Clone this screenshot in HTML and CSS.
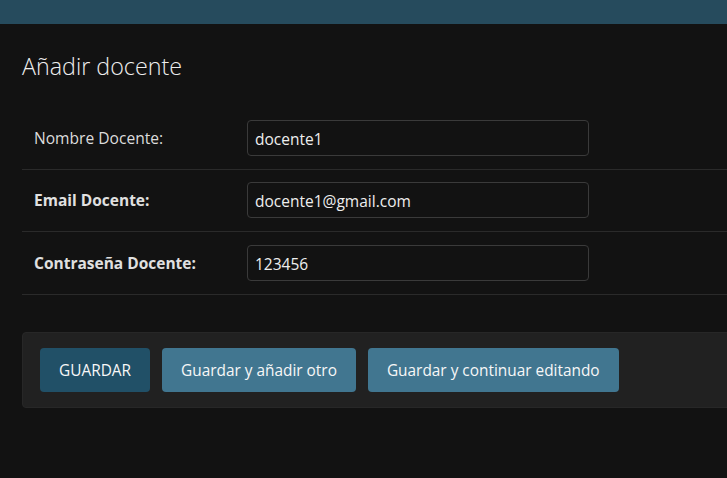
FILE: index.html
```html
<!DOCTYPE html>
<html lang="es">
<head>
<meta charset="utf-8">
<title>Añadir docente</title>
<link rel="stylesheet" href="styles.css">
</head>
<body>
<header class="topbar"></header>
<main class="content">
  <h1 class="title">Añadir docente</h1>
  <form class="form">
    <div class="form-row">
      <label class="label">Nombre Docente:</label>
      <input class="field" type="text" value="docente1">
    </div>
    <div class="form-row">
      <label class="label required">Email Docente:</label>
      <input class="field" type="text" value="docente1@gmail.com">
    </div>
    <div class="form-row form-row-last">
      <label class="label required">Contraseña Docente:</label>
      <input class="field" type="text" value="123456">
    </div>
    <div class="submit-row">
      <button type="button" class="btn btn-default">GUARDAR</button>
      <button type="button" class="btn">Guardar y añadir otro</button>
      <button type="button" class="btn">Guardar y continuar editando</button>
    </div>
  </form>
</main>
</body>
</html>
```
FILE: styles.css
```css
html, body {
  margin: 0;
  padding: 0;
  background: #121212;
  overflow: hidden;
}
body {
  font-family: "Open Sans", "Noto Sans", sans-serif;
  color: #e0e0e0;
}
.topbar {
  height: 24px;
  background: #264b5d;
}
.content {
  padding-left: 22px;
  margin-right: -20px;
}
.title {
  margin: 27px 0 27px;
  font-size: 23.3px;
  line-height: 30px;
  font-weight: 300;
  color: #eeeeee;
}
.form {
  margin: 0;
}
.form-row {
  display: flex;
  align-items: center;
  padding: 12px 0 13px 12px;
  border-bottom: 1px solid #2a2a2a;
}
.form-row-last {
  padding-top: 13px;
}
.label {
  width: 213px;
  flex: none;
  font-size: 15.6px;
  line-height: 20px;
  color: #dcdcdc;
}
.label.required {
  font-weight: 700;
  font-size: 15.5px;
  color: #e0e0e0;
}
.field {
  box-sizing: border-box;
  width: 342px;
  height: 36px;
  margin: 0;
  padding: 1px 7px 0;
  background: #121212;
  border: 1px solid #3a3a3a;
  border-radius: 4px;
  color: #eeeeee;
  font-family: "Open Sans", "Noto Sans", sans-serif;
  font-size: 15.5px;
  outline: none;
}
.submit-row {
  margin-top: 37px;
  display: flex;
  gap: 12px;
  padding: 15px 17px;
  background: #212121;
  border: 1px solid #272727;
  border-radius: 4px;
}
.btn {
  border: none;
  border-radius: 4px;
  padding: 13px 19px 11px;
  background: #417690;
  color: #f7f7f7;
  font-family: "Open Sans", "Noto Sans", sans-serif;
  font-size: 15.4px;
  line-height: 20px;
  cursor: pointer;
}
.btn-default {
  background: #215067;
}
```
